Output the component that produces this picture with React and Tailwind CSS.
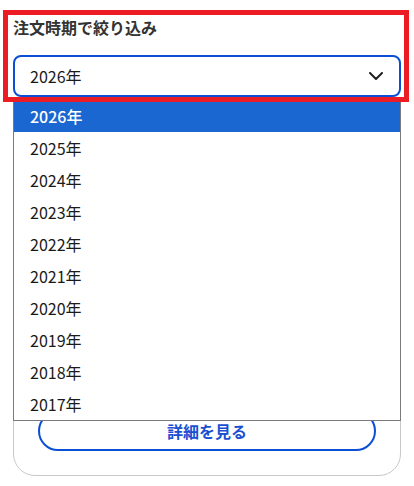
const years = [2026, 2025, 2024, 2023, 2022, 2021, 2020, 2019, 2018, 2017];

const ChevronDown = () => (
  <svg viewBox="0 0 14 8" fill="none" className="w-[14px] h-[8px] text-[#222]">
    <path d="M1 1l6 6 6-6" stroke="currentColor" strokeWidth="2" strokeLinecap="round" strokeLinejoin="round" />
  </svg>
);

export default function App() {
  return (
    <div
      className="relative w-[414px] h-[486px] overflow-hidden bg-white text-[#1a1a1a]"
      style={{ fontFamily: '"Noto Sans CJK JP", "Noto Sans", sans-serif' }}
    >
      {/* filter block, highlighted */}
      <div className="pt-[10px] pl-[3px]">
        <div className="relative z-30 w-[406px] border-[5px] border-[#ec1c24] pl-[5px] pr-[3px]">
          <div className="text-[16px] leading-[24px] font-bold text-[#333]">注文時期で絞り込み</div>
          <div className="mt-[16px] h-[42px] flex items-center justify-between rounded-lg border-2 border-[#0b4fd6] bg-white pl-[15px] pr-[16px]">
            <span className="text-[16px] leading-6">2026年</span>
            <ChevronDown />
          </div>
        </div>
      </div>

      {/* order card (mostly under the open list) */}
      <div className="mx-[13px] mt-[8px] h-[366px] flex flex-col justify-end rounded-[22px] border border-[#c9c9c9] px-6 pb-6">
        <button className="h-10 w-full rounded-full border-2 border-[#0b4fd6] text-[16px] font-bold text-[#1a4fd2]">
          詳細を見る
        </button>
      </div>

      {/* open select list */}
      <ul className="absolute left-[13px] top-[99px] z-20 w-[388px] border border-[#7a7a7a] bg-white">
        {years.map((y, i) => (
          <li
            key={y}
            className={`h-8 flex items-center pl-[16px] text-[16px] ${
              i === 0 ? "bg-[#1a67d2] text-white font-medium" : "text-[#1a1a1a]"
            }`}
          >
            {y}年
          </li>
        ))}
      </ul>
    </div>
  );
}
